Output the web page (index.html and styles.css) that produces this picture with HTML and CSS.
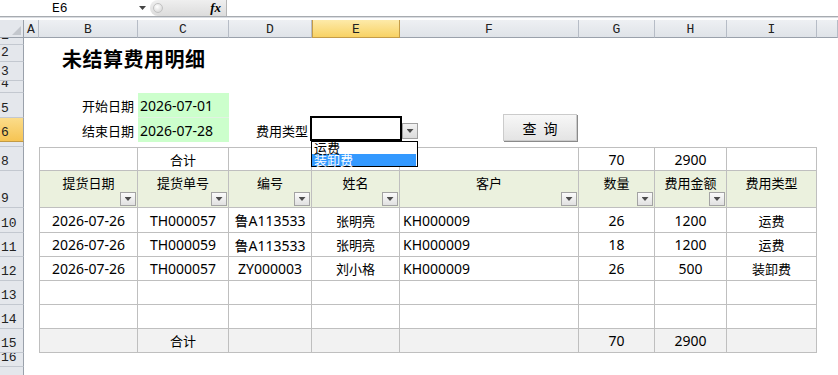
FILE: index.html
```html
<!DOCTYPE html>
<html lang="zh-CN">
<head>
    <meta charset="UTF-8">
    <title>未结算费用明细</title>
    <link rel="stylesheet" href="styles.css">
</head>
<body>
    <!-- barra de fórmulas -->
    <div class="formula-bar">
        <div class="name-box"><span>E6</span><span class="arrow"></span></div>
        <div class="fx-box"><span class="grip"></span><span class="fx">fx</span></div>
        <div class="formula-input"></div>
    </div>

    <div class="sheet">
        <div class="row h18">
            <div class="corner"><span class="tri"></span></div>
            <div class="ch">A</div>
            <div class="ch">B</div>
            <div class="ch">C</div>
            <div class="ch">D</div>
            <div class="ch sel">E</div>
            <div class="ch">F</div>
            <div class="ch">G</div>
            <div class="ch">H</div>
            <div class="ch">I</div>
            <div class="ch"></div>
        </div>

        <div class="row h7"><div class="rh">1</div></div>
        <div class="row h17">
            <div class="rh">2</div>
            <div></div>
            <div class="title">未结算费用明细</div>
        </div>
        <div class="row h19"><div class="rh">3</div></div>
        <div class="row h12"><div class="rh">4</div></div>

        <div class="row h25">
            <div class="rh">5</div>
            <div></div>
            <div class="label">开始日期</div>
            <div class="input upper">2026-07-01</div>
        </div>
        <div class="row">
            <div class="rh sel">6</div>
            <div></div>
            <div class="label">结束日期</div>
            <div class="input">2026-07-28</div>
            <div class="label">费用类型</div>
            <div class="active">
                <span class="dd-btn"></span>
                <div class="dd-list">
                    <div>运费</div>
                    <div class="on">装卸费</div>
                </div>
            </div>
            <div class="btn-cell"><button class="query">查 询</button></div>
        </div>
        <div class="row h5"><div class="rh">7</div></div>

        <!-- tabela -->
        <div class="row top">
            <div class="rh">8</div>
            <div></div>
            <div class="t l"></div>
            <div class="t zh">合计</div>
            <div class="t"></div>
            <div class="t"></div>
            <div class="t"></div>
            <div class="t">70</div>
            <div class="t">2900</div>
            <div class="t"></div>
        </div>
        <div class="row h37">
            <div class="rh">9</div>
            <div></div>
            <div class="t th l"><span>提货日期</span><span class="filter"></span></div>
            <div class="t th"><span>提货单号</span><span class="filter"></span></div>
            <div class="t th"><span>编号</span><span class="filter"></span></div>
            <div class="t th"><span>姓名</span><span class="filter"></span></div>
            <div class="t th"><span>客户</span><span class="filter"></span></div>
            <div class="t th"><span>数量</span><span class="filter"></span></div>
            <div class="t th"><span>费用金额</span><span class="filter"></span></div>
            <div class="t th"><span>费用类型</span></div>
        </div>
        <div class="row h25">
            <div class="rh">10</div>
            <div></div>
            <div class="t l">2026-07-26</div>
            <div class="t">TH000057</div>
            <div class="t">鲁A113533</div>
            <div class="t zh">张明亮</div>
            <div class="t left">KH000009</div>
            <div class="t">26</div>
            <div class="t">1200</div>
            <div class="t zh">运费</div>
        </div>
        <div class="row">
            <div class="rh">11</div>
            <div></div>
            <div class="t l">2026-07-26</div>
            <div class="t">TH000059</div>
            <div class="t">鲁A113533</div>
            <div class="t zh">张明亮</div>
            <div class="t left">KH000009</div>
            <div class="t">18</div>
            <div class="t">1200</div>
            <div class="t zh">运费</div>
        </div>
        <div class="row">
            <div class="rh">12</div>
            <div></div>
            <div class="t l">2026-07-26</div>
            <div class="t">TH000057</div>
            <div class="t">ZY000003</div>
            <div class="t zh">刘小格</div>
            <div class="t left">KH000009</div>
            <div class="t">26</div>
            <div class="t">500</div>
            <div class="t zh">装卸费</div>
        </div>
        <div class="row">
            <div class="rh">13</div>
            <div></div>
            <div class="t l"></div>
            <div class="t"></div>
            <div class="t"></div>
            <div class="t"></div>
            <div class="t"></div>
            <div class="t"></div>
            <div class="t"></div>
            <div class="t"></div>
        </div>
        <div class="row">
            <div class="rh">14</div>
            <div></div>
            <div class="t l"></div>
            <div class="t"></div>
            <div class="t"></div>
            <div class="t"></div>
            <div class="t"></div>
            <div class="t"></div>
            <div class="t"></div>
            <div class="t"></div>
        </div>
        <div class="row total">
            <div class="rh">15</div>
            <div></div>
            <div class="t l"></div>
            <div class="t zh">合计</div>
            <div class="t"></div>
            <div class="t"></div>
            <div class="t"></div>
            <div class="t">70</div>
            <div class="t">2900</div>
            <div class="t"></div>
        </div>

        <div class="row h14"><div class="rh">16</div></div>
        <div class="row"><div class="rh">17</div></div>
    </div>
</body>
</html>
```

FILE: styles.css
```css
* {
    margin: 0;
    padding: 0;
    box-sizing: border-box;
}

body {
    width: 838px;
    height: 375px;
    overflow: hidden;
    background: #fff;
    color: #000;
    font-family: "Noto Sans", "Noto Sans CJK SC", sans-serif;
    font-size: 14px;
}

/* barra de fórmulas */
.formula-bar {
    display: flex;
    height: 17px;
    border-bottom: 1px solid #a7abb0;
    box-shadow: 0 1px 0 #dadde2;
    margin-bottom: 3px;
}

.name-box {
    width: 150px;
    display: flex;
    align-items: center;
    padding-left: 52px;
    font: 13px "Liberation Mono", monospace;
}

.name-box .arrow {
    margin-left: auto;
    margin-right: 4px;
    width: 7px;
    height: 4px;
    background: #444;
    clip-path: polygon(0 0, 100% 0, 50% 100%);
}

.fx-box {
    width: 77px;
    height: 16px;
    display: flex;
    align-items: center;
    padding: 0 5px 0 3px;
    background: linear-gradient(#efefef, #dcdcdc);
    border-radius: 8px 0 0 8px;
    border-right: 1px solid #b5b5b5;
}

.grip {
    width: 10px;
    height: 10px;
    border-radius: 50%;
    border: 1px solid #c2c2c2;
    background: radial-gradient(circle at 40% 35%, #fff, #d0d0d0);
}

.fx {
    margin-left: auto;
    font: italic bold 13px "Liberation Serif", serif;
}

.formula-input {
    flex: 1;
}

/* planilha */
.row {
    display: grid;
    grid-template-columns: 24px 15px 99px 91px 83px 88px 179px 76px 72px 90px 1fr;
    grid-template-rows: minmax(0, 1fr);
    height: 24px;
}

.row > div {
    min-width: 0;
    min-height: 0;
    display: flex;
    align-items: center;
    white-space: nowrap;
}

.h5 { height: 5px; }
.h7 { height: 7px; }
.h12 { height: 12px; }
.h14 { height: 14px; }
.h17 { height: 17px; }
.h18 { height: 18px; }
.h19 { height: 19px; }
.h25 { height: 25px; }
.h37 { height: 37px; }

.corner {
    background: #e4e7ec;
    border-right: 1px solid #9aa1ab;
    border-bottom: 1px solid #9aa1ab;
    justify-content: flex-end;
    align-items: flex-end !important;
    padding: 0 2px 2px 0;
}

.corner .tri {
    width: 9px;
    height: 9px;
    background: #c3c7cd;
    clip-path: polygon(100% 0, 100% 100%, 0 100%);
}

.row > .ch {
    justify-content: center;
    padding-top: 2px;
    background: linear-gradient(#eef0f3, #dfe3e8);
    border-right: 1px solid #b6bcc6;
    border-bottom: 1px solid #9aa1ab;
    font: 13px "Liberation Mono", monospace;
    color: #222;
}

.row > .ch.sel {
    background: linear-gradient(#fdeaa9, #f8d264);
    border: 1px solid #c49c48;
    border-top: none;
}

.row > .rh {
    align-items: flex-end;
    overflow: hidden;
    padding: 0 0 2px 1px;
    background: #e4e7ec;
    border-right: 1px solid #9aa1ab;
    border-bottom: 1px solid #c3c8d0;
    font: 13px/13px "Liberation Mono", monospace;
    color: #222;
}

.row > .rh.sel {
    background: linear-gradient(#fbdc8a, #f6c453);
    border-bottom-color: #c29a44;
}

.row > .title {
    align-items: flex-start;
    padding: 2px 0 0 23px;
    font-family: "Noto Sans CJK SC", sans-serif;
    font-size: 20px;
    font-weight: 700;
    line-height: 24px;
    letter-spacing: 0.5px;
}

.row > .label {
    justify-content: flex-end;
    padding-right: 4px;
    font-size: 13px;
}

.input {
    background: #ccffcc;
    padding-left: 2px;
}

.input.upper {
    border-bottom: 1px solid #e2f2e2;
}

/* célula ativa com lista suspensa */
.row > .active {
    position: relative;
    z-index: 5;
}

.active::before {
    content: "";
    position: absolute;
    top: -2px;
    left: -2px;
    right: -2px;
    bottom: 1px;
    border: 2px solid #000;
}

.dd-btn {
    position: absolute;
    left: 90px;
    top: 5px;
    width: 16px;
    height: 16px;
    display: flex;
    align-items: center;
    justify-content: center;
    border: 1px solid #a0a0a0;
    background: linear-gradient(#f2f2f2, #dcdcdc);
}

.dd-btn::after,
.filter::after {
    content: "";
    width: 7px;
    height: 4px;
    background: #4d4d4d;
    clip-path: polygon(0 0, 100% 0, 50% 100%);
}

.dd-list {
    position: absolute;
    left: -1px;
    top: 23px;
    width: 107px;
    height: 26px;
    border: 1px solid #000;
    background: #fff;
    font: 13px/12px "Noto Sans CJK SC", sans-serif;
}

.dd-list div {
    height: 12px;
    padding-left: 2px;
}

.dd-list .on {
    background: #3399ff;
    color: #fff;
    margin-right: 1px;
}

.row > .btn-cell {
    position: relative;
}

.query {
    position: absolute;
    left: 103px;
    top: -4px;
    width: 74px;
    height: 27px;
    border: 1px solid #cbcbcb;
    box-shadow: 1px 1px 0 #8a8a8a;
    background: linear-gradient(#f7f7f7, #e4e4e4);
    font-family: "Noto Sans CJK SC", sans-serif;
    font-size: 14px;
    word-spacing: 4px;
    color: #000;
}

/* tabela */
.row > .t {
    justify-content: center;
    border-right: 1px solid #bfbfbf;
    border-bottom: 1px solid #bfbfbf;
}

.row > .t.l {
    border-left: 1px solid #bfbfbf;
}

.top > .t {
    border-top: 1px solid #bfbfbf;
}

.row > .t.left {
    justify-content: flex-start;
    padding-left: 3px;
}

.row > .zh,
.row > .th {
    font-size: 13px;
}

.row > .th {
    flex-direction: column;
    justify-content: space-between;
    padding-top: 2px;
    background: #ebf1de;
}

.filter {
    align-self: flex-end;
    width: 16px;
    height: 15px;
    margin: 0 1px 1px 0;
    display: flex;
    align-items: center;
    justify-content: center;
    border: 1px solid #a3a3a3;
    background: linear-gradient(#fbfbfb, #e1e1e1);
}

.total > .t {
    background: #f2f2f2;
}
```
